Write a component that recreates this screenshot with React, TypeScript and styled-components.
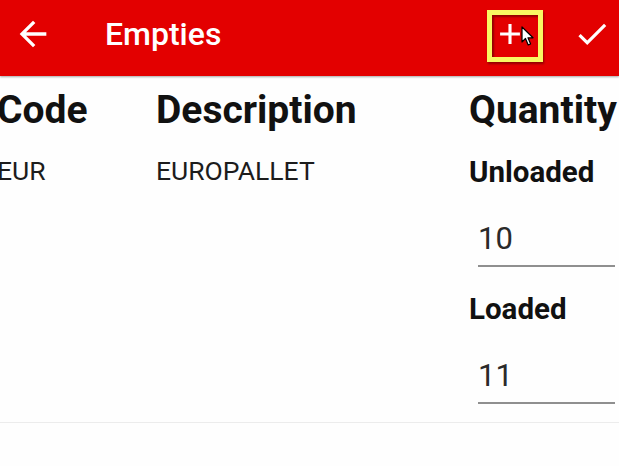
import styled, { createGlobalStyle } from "styled-components";

const GlobalStyle = createGlobalStyle`
  html, body {
    margin: 0;
    padding: 0;
    background: #ffffff;
    font-family: Roboto, "Liberation Sans", sans-serif;
    overflow: hidden;
  }
`;

const Page = styled.div`
  width: 619px;
  height: 466px;
  background: #fefefe;
  overflow: hidden;
`;

const Toolbar = styled.header`
  display: flex;
  align-items: center;
  box-sizing: border-box;
  height: 76px;
  padding-bottom: 8px;
  background: #e30000;
  color: #ffffff;
  box-shadow: 0 1px 2px rgba(0, 0, 0, 0.35);
  position: relative;
  z-index: 1;
`;

const IconButton = styled.button<{ $size: number; $ml?: number }>`
  display: flex;
  align-items: center;
  justify-content: center;
  position: relative;
  width: ${(p) => p.$size}px;
  height: ${(p) => p.$size}px;
  margin-left: ${(p) => p.$ml ?? 0}px;
  padding: 0;
  border: none;
  background: none;
  color: #ffffff;
  & > svg {
    display: block;
  }
`;

const Title = styled.h1`
  margin: 0 0 0 52px;
  font-size: 32px;
  font-weight: 500;
  line-height: 38px;
  flex: 1;
`;

const Highlight = styled.div`
  position: absolute;
  left: -3px;
  top: -4px;
  width: 46px;
  height: 42px;
  border: 5px solid #f9f862;
  box-shadow: 1px 2px 2px rgba(0, 0, 0, 0.35),
    inset 2px 2px 2px rgba(0, 0, 0, 0.35);
  pointer-events: none;
`;

const Cursor = styled.svg`
  position: absolute;
  left: 31px;
  top: 12px;
`;

const Table = styled.div`
  display: grid;
  grid-template-columns: 159px 313px 1fr;
  margin-left: -3px;
  padding: 12px 0 18px;
  border-bottom: 1px solid #ececec;
`;

const HeadCell = styled.div`
  font-size: 39px;
  font-weight: 700;
  line-height: 44px;
  color: #111111;
  white-space: nowrap;
`;

const Cell = styled.div`
  margin-top: 24px;
  font-size: 26.5px;
  line-height: 30px;
  color: #1c1c1c;
`;

const QuantityCell = styled.div`
  margin-top: 23px;
  display: flex;
  flex-direction: column;
`;

const FieldLabel = styled.div<{ $first?: boolean }>`
  margin-top: ${(p) => (p.$first ? 0 : 25)}px;
  font-size: 29.5px;
  font-weight: 700;
  line-height: 34px;
  color: #111111;
`;

const Field = styled.div`
  margin: 32px 4px 0 9px;
  padding-bottom: 8px;
  border-bottom: 2px solid #8f8f8f;
  font-size: 31px;
  line-height: 36px;
  color: #2a2a2a;
`;

const ArrowBack = () => (
  <svg width="40" height="40" viewBox="0 0 24 24" fill="currentColor">
    <path d="M20 11H7.83l5.59-5.59L12 4l-8 8 8 8 1.41-1.41L7.83 13H20v-2z" />
  </svg>
);

const Plus = () => (
  <svg width="34" height="34" viewBox="0 0 24 24" fill="currentColor">
    <path d="M19 13.1h-5.9V19h-2.2v-5.9H5v-2.2h5.9V5h2.2v5.9H19v2.2z" />
  </svg>
);

const Check = () => (
  <svg width="38" height="38" viewBox="0 0 24 24" fill="currentColor">
    <path d="M9 16.17L4.83 12l-1.42 1.41L9 19 21 7l-1.41-1.41z" />
  </svg>
);

const Pointer = () => (
  <Cursor width="14" height="21" viewBox="0 0 14 21">
    <path
      d="M1 1 L1 16 L4.5 12.5 L7.2 19 L9.6 18 L7 11.8 L12 11.8 Z"
      fill="#ffffff"
      stroke="#000000"
      strokeWidth="1.2"
      strokeLinejoin="round"
    />
  </Cursor>
);

export default function App() {
  return (
    <Page>
      <GlobalStyle />
      <Toolbar>
        <IconButton $size={40} $ml={13}>
          <ArrowBack />
        </IconButton>
        <Title>Empties</Title>
        <IconButton $size={40}>
          <Plus />
          <Highlight />
          <Pointer />
        </IconButton>
        <IconButton $size={38} $ml={43}>
          <Check />
        </IconButton>
        <div style={{ width: 8 }} />
      </Toolbar>
      <Table>
        <HeadCell>Code</HeadCell>
        <HeadCell>Description</HeadCell>
        <HeadCell>Quantity</HeadCell>
        <Cell>EUR</Cell>
        <Cell>EUROPALLET</Cell>
        <QuantityCell>
          <FieldLabel $first>Unloaded</FieldLabel>
          <Field>10</Field>
          <FieldLabel>Loaded</FieldLabel>
          <Field>11</Field>
        </QuantityCell>
      </Table>
    </Page>
  );
}
